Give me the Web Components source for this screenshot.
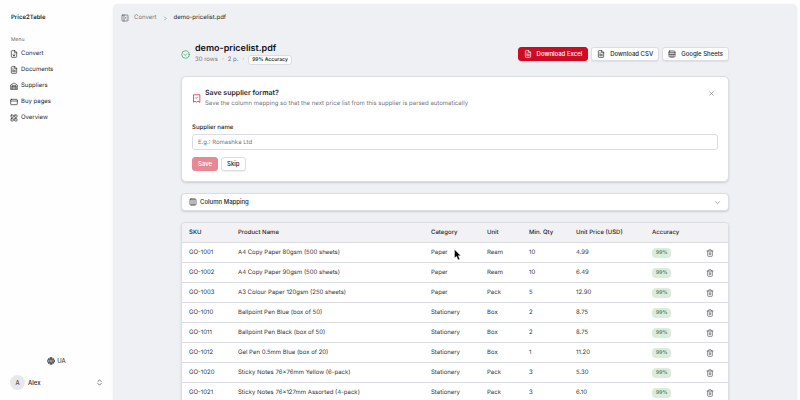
<!DOCTYPE html>
<html lang="en">
<head>
<meta charset="utf-8">
<meta name="viewport" content="width=device-width, initial-scale=1">
<title>Price2Table</title>
<style>
  :root {
    --ink: #27272a;
    --muted: #76767e;
    --line: #dcdde2;
    --canvas: #eff0f4;
    --red: #cf0a24;
    --shadow: 0 1px 2px rgba(30, 34, 50, 0.16);
  }

  body {
    margin: 0;
    background: #fefefe;
    color: var(--ink);
    font: 6px/10px Inter, "Liberation Sans", sans-serif;
    text-rendering: geometricPrecision;
  }
</style>
</head>
<body>
<app-shell>
  <side-bar slot="sidebar"></side-bar>
  <bread-crumb></bread-crumb>
  <page-content>
    <result-header></result-header>
    <format-card></format-card>
    <column-mapping></column-mapping>
    <price-table></price-table>
  </page-content>
</app-shell>
<mouse-pointer></mouse-pointer>

<script>
const ICONS = {
  convert: `<path d="M14 2H6a2 2 0 0 0-2 2v16a2 2 0 0 0 2 2h12a2 2 0 0 0 2-2V8z"/><path d="M14 2v6h6M12 18v-6M9 15l3 3 3-3"/>`,
  document: `<path d="M14 2H6a2 2 0 0 0-2 2v16a2 2 0 0 0 2 2h12a2 2 0 0 0 2-2V8z"/><path d="M14 2v6h6M8 9h2M8 13h8M8 17h8"/>`,
  suppliers: `<path d="M2 21V9l10-6 10 6v12z"/><path d="M6 21V11h12v10M6 14h12M6 18h12"/>`,
  page: `<rect x="2" y="4" width="20" height="16" rx="2"/><path d="M2 9h20"/>`,
  grid: `<rect x="3" y="3" width="7" height="7" rx="1"/><rect x="14" y="3" width="7" height="7" rx="1"/><rect x="3" y="14" width="7" height="7" rx="1"/><rect x="14" y="14" width="7" height="7" rx="1"/>`,
  globe: `<circle cx="12" cy="12" r="10"/><path d="M12 2a14.5 14.5 0 0 0 0 20 14.5 14.5 0 0 0 0-20M2 12h20M4 7h16M4 17h16"/>`,
  updown: `<path d="m6 15 6 6 6-6M6 9l6-6 6 6"/>`,
  panel: `<rect x="3" y="3" width="18" height="18" rx="2"/><path d="M9 3v18M16 9l-3 3 3 3"/>`,
  right: `<path d="m9 17 5-5-5-5"/>`,
  down: `<path d="m5 9 7 7 7-7"/>`,
  check: `<circle cx="12" cy="12" r="10"/><path d="m8.5 12 2.5 2.5 4.5-4.5"/>`,
  table: `<rect x="3" y="3" width="18" height="18" rx="2"/><path d="M3 8h18M3 13h18M9 13v8M15 13v8"/>`,
  bookmark: `<path d="m20 22-4-3-4 3-4-3-4 3V2h16z"/><path d="m9 10 2 2 4-4"/>`,
  close: `<path d="M18 6 6 18M6 6l12 12"/>`,
  columns: `<rect x="3" y="3" width="18" height="18" rx="2"/><path d="M9 3v18M15 3v18"/>`,
  trash: `<path d="M3 6h18M19 6v14a2 2 0 0 1-2 2H7a2 2 0 0 1-2-2V6M8 6V4a2 2 0 0 1 2-2h4a2 2 0 0 1 2 2v2M10 11v6M14 11v6"/>`,
};

class UiIcon extends HTMLElement {
  connectedCallback() {
    this.attachShadow({ mode: "open" });
    this.shadowRoot.innerHTML = `
      <style>
        :host {
          display: block;
          flex: none;
          height: var(--icon-size, 8px);
          width: var(--icon-size, 8px);
        }

        svg {
          display: block;
          fill: none;
          height: 100%;
          stroke: currentColor;
          stroke-linecap: round;
          stroke-linejoin: round;
          stroke-width: 2;
          width: 100%;
        }
      </style>
      <svg viewBox="0 0 24 24" aria-hidden="true">${ICONS[this.getAttribute("name")]}</svg>
    `;
  }
}

class AppShell extends HTMLElement {
  connectedCallback() {
    this.attachShadow({ mode: "open" });
    this.shadowRoot.innerHTML = `
      <style>
        :host {
          box-sizing: border-box;
          display: grid;
          grid-template-columns: 113px minmax(0, 1fr);
          height: 100vh;
          padding: 4px 3px 0 0;
        }

        main {
          background: var(--canvas);
          border-radius: 5px 5px 0 0;
          box-shadow: 0 0 2px rgba(30, 34, 50, 0.08);
          overflow-y: auto;
          scrollbar-width: none;
        }
      </style>
      <slot name="sidebar"></slot>
      <main><slot></slot></main>
    `;
  }
}

class NavLink extends HTMLElement {
  connectedCallback() {
    this.attachShadow({ mode: "open" });
    this.shadowRoot.innerHTML = `
      <style>
        :host {
          display: block;
        }

        a {
          align-items: center;
          color: inherit;
          display: flex;
          gap: 3px;
          height: 16px;
          text-decoration: none;
        }
      </style>
      <a href="#"><ui-icon name="${this.getAttribute("icon")}"></ui-icon><slot></slot></a>
    `;
  }
}

class SideBar extends HTMLElement {
  connectedCallback() {
    this.attachShadow({ mode: "open" });
    this.shadowRoot.innerHTML = `
      <style>
        :host {
          box-sizing: border-box;
          display: flex;
          flex-direction: column;
          min-height: 0;
          padding: 9px 10px 10px;
        }

        .brand {
          font-weight: 600;
          padding-left: 1px;
        }

        .label {
          color: #62626a;
          font-size: 5px;
          margin: 12px 0 1px;
          padding-left: 1px;
        }

        nav {
          flex: 1;
        }

        button {
          align-items: center;
          background: none;
          border: 0;
          color: inherit;
          display: flex;
          font: inherit;
          padding: 0;
        }

        .lang {
          align-self: center;
          gap: 2px;
          margin-bottom: 9px;
        }

        .user {
          gap: 3px;
          width: 100%;
          --icon-size: 7px;
        }

        .avatar {
          background: #e8e8ea;
          border-radius: 50%;
          height: 15px;
          line-height: 15px;
          text-align: center;
          width: 15px;
        }

        .name {
          flex: 1;
          font-weight: 500;
          text-align: left;
        }
      </style>
      <div class="brand">Price2Table</div>
      <div class="label">Menu</div>
      <nav>
        <nav-link icon="convert">Convert</nav-link>
        <nav-link icon="document">Documents</nav-link>
        <nav-link icon="suppliers">Suppliers</nav-link>
        <nav-link icon="page">Buy pages</nav-link>
        <nav-link icon="grid">Overview</nav-link>
      </nav>
      <button class="lang" type="button"><ui-icon name="globe"></ui-icon>UA</button>
      <button class="user" type="button">
        <span class="avatar">A</span><span class="name">Alex</span><ui-icon name="updown"></ui-icon>
      </button>
    `;
  }
}

class BreadCrumb extends HTMLElement {
  connectedCallback() {
    this.attachShadow({ mode: "open" });
    this.shadowRoot.innerHTML = `
      <style>
        :host {
          align-items: center;
          display: flex;
          gap: 5px;
          padding: 9px 8px 0;
        }

        button {
          background: none;
          border: 0;
          color: #55555c;
          padding: 0;
        }

        a {
          color: var(--muted);
          text-decoration: none;
        }

        .sep {
          color: var(--muted);
          --icon-size: 7px;
        }
      </style>
      <button type="button" aria-label="Toggle sidebar"><ui-icon name="panel"></ui-icon></button>
      <a href="#">Convert</a>
      <ui-icon class="sep" name="right"></ui-icon>
      <span>demo-pricelist.pdf</span>
    `;
  }
}

class PageContent extends HTMLElement {
  connectedCallback() {
    this.attachShadow({ mode: "open" });
    this.shadowRoot.innerHTML = `
      <style>
        :host {
          display: flex;
          flex-direction: column;
          gap: 11px;
          margin: 0 auto;
          max-width: 548px;
          padding: 20px 16px 16px;
        }
      </style>
      <slot></slot>
    `;
  }
}

class UiButton extends HTMLElement {
  connectedCallback() {
    const icon = this.getAttribute("icon");
    this.attachShadow({ mode: "open" });
    this.shadowRoot.innerHTML = `
      <style>
        :host {
          display: block;
        }

        button {
          align-items: center;
          background: #fff;
          border: 1px solid var(--line);
          border-radius: 3px;
          box-shadow: 0 1px 1px rgba(30, 34, 50, 0.08);
          color: inherit;
          display: flex;
          font: inherit;
          font-weight: 500;
          gap: 5px;
          height: 14px;
          padding: 0 5px;
          white-space: nowrap;
        }

        :host([primary]) button {
          background: var(--red);
          border-color: var(--red);
          color: #fff;
        }

        button:disabled {
          opacity: 0.48;
        }
      </style>
      <button type="button" ${this.hasAttribute("disabled") ? "disabled" : ""}>
        ${icon ? `<ui-icon name="${icon}"></ui-icon>` : ""}<slot></slot>
      </button>
    `;
  }
}

class ResultHeader extends HTMLElement {
  connectedCallback() {
    this.attachShadow({ mode: "open" });
    this.shadowRoot.innerHTML = `
      <style>
        :host {
          align-items: center;
          display: flex;
          gap: 5px;
        }

        .status {
          color: #2fae66;
          --icon-size: 9px;
        }

        .title {
          flex: 1;
        }

        h1 {
          color: #111114;
          font-size: 9px;
          font-weight: 600;
          line-height: 12px;
          margin: 0;
        }

        .meta {
          align-items: center;
          color: var(--muted);
          display: flex;
          gap: 4px;
        }

        .badge {
          background: #fff;
          border: 1px solid var(--line);
          border-radius: 3px;
          color: var(--ink);
          font-size: 5px;
          font-weight: 600;
          line-height: 8px;
          padding: 0 3px;
        }

        .actions {
          display: flex;
          gap: 3px;
        }
      </style>
      <ui-icon class="status" name="check"></ui-icon>
      <div class="title">
        <h1>demo-pricelist.pdf</h1>
        <div class="meta">
          <span>30 rows</span><span>·</span><span>2 p.</span><span>·</span><span class="badge">99% Accuracy</span>
        </div>
      </div>
      <div class="actions">
        <ui-button primary icon="document">Download Excel</ui-button>
        <ui-button icon="document">Download CSV</ui-button>
        <ui-button icon="table">Google Sheets</ui-button>
      </div>
    `;
  }
}

class FormatCard extends HTMLElement {
  connectedCallback() {
    this.attachShadow({ mode: "open" });
    this.shadowRoot.innerHTML = `
      <style>
        :host {
          background: #fff;
          border: 1px solid var(--line);
          border-radius: 5px;
          box-shadow: var(--shadow);
          display: block;
          padding: 10px;
        }

        header {
          align-items: center;
          display: flex;
          gap: 4px;
        }

        .mark {
          color: #d3243f;
          --icon-size: 9px;
        }

        .text {
          flex: 1;
        }

        h2 {
          font-size: 7px;
          font-weight: 600;
          line-height: 11px;
          margin: 0;
        }

        p {
          color: var(--muted);
          line-height: 12px;
          margin: 0;
        }

        .close {
          align-self: flex-start;
          background: none;
          border: 0;
          color: #66666d;
          padding: 3px;
          --icon-size: 7px;
        }

        label {
          display: block;
          font-weight: 500;
          line-height: 12px;
          margin-top: 12px;
        }

        input {
          border: 1px solid var(--line);
          border-radius: 3px;
          box-sizing: border-box;
          color: inherit;
          display: block;
          font: inherit;
          height: 16px;
          padding: 0 5px;
          text-rendering: inherit;
          width: 100%;
        }

        input::placeholder {
          color: var(--muted);
        }

        .actions {
          display: flex;
          gap: 3px;
          margin-top: 7px;
        }
      </style>
      <header>
        <ui-icon class="mark" name="bookmark"></ui-icon>
        <div class="text">
          <h2>Save supplier format?</h2>
          <p>Save the column mapping so that the next price list from this supplier is parsed automatically</p>
        </div>
        <button class="close" type="button" aria-label="Close"><ui-icon name="close"></ui-icon></button>
      </header>
      <label for="supplier">Supplier name</label>
      <input id="supplier" type="text" placeholder="E.g.: Romashka Ltd">
      <div class="actions">
        <ui-button primary disabled>Save</ui-button>
        <ui-button>Skip</ui-button>
      </div>
    `;
  }
}

class ColumnMapping extends HTMLElement {
  connectedCallback() {
    this.attachShadow({ mode: "open" });
    this.shadowRoot.innerHTML = `
      <style>
        :host {
          display: block;
        }

        button {
          align-items: center;
          background: #fff;
          border: 1px solid var(--line);
          border-radius: 4px;
          box-shadow: var(--shadow);
          color: inherit;
          display: flex;
          font: inherit;
          font-weight: 500;
          gap: 3px;
          height: 18px;
          padding: 0 7px;
          text-align: left;
          width: 100%;
        }

        span {
          flex: 1;
        }

        .arrow {
          color: #66666d;
          --icon-size: 7px;
        }
      </style>
      <button type="button" aria-expanded="false">
        <ui-icon name="columns"></ui-icon><span>Column Mapping</span><ui-icon class="arrow" name="down"></ui-icon>
      </button>
    `;
  }
}

const ROWS = [
  ["GO-1001", "A4 Copy Paper 80gsm (500 sheets)", "Paper", "Ream", "10", "4.99"],
  ["GO-1002", "A4 Copy Paper 90gsm (500 sheets)", "Paper", "Ream", "10", "6.49"],
  ["GO-1003", "A3 Colour Paper 120gsm (250 sheets)", "Paper", "Pack", "5", "12.90"],
  ["GO-1010", "Ballpoint Pen Blue (box of 50)", "Stationery", "Box", "2", "8.75"],
  ["GO-1011", "Ballpoint Pen Black (box of 50)", "Stationery", "Box", "2", "8.75"],
  ["GO-1012", "Gel Pen 0.5mm Blue (box of 20)", "Stationery", "Box", "1", "11.20"],
  ["GO-1020", "Sticky Notes 76×76mm Yellow (6-pack)", "Stationery", "Pack", "3", "5.30"],
  ["GO-1021", "Sticky Notes 76×127mm Assorted (4-pack)", "Stationery", "Pack", "3", "6.10"],
];

class PriceTable extends HTMLElement {
  connectedCallback() {
    const rows = ROWS.map(
      (row) => `
        <tr>
          ${row.map((cell) => `<td>${cell}</td>`).join("")}
          <td><span class="score">99%</span></td>
          <td><button type="button" aria-label="Delete ${row[0]}"><ui-icon name="trash"></ui-icon></button></td>
        </tr>`
    ).join("");

    this.attachShadow({ mode: "open" });
    this.shadowRoot.innerHTML = `
      <style>
        :host {
          background: #fff;
          border: 1px solid var(--line);
          border-radius: 4px;
          box-shadow: var(--shadow);
          display: block;
          overflow: hidden;
        }

        table {
          border-collapse: separate;
          border-spacing: 0;
          table-layout: fixed;
          width: 100%;
        }

        th,
        td {
          border-bottom: 1px solid var(--line);
          box-sizing: border-box;
          height: 20px;
          padding: 1px 0 0 7px;
          text-align: left;
          white-space: nowrap;
        }

        th {
          background: #f2f2f5;
          font-weight: 500;
        }

        td {
          color: #333338;
        }

        .sku { width: 49px; }
        .category { width: 56px; }
        .unit { width: 42px; }
        .qty { width: 47px; }
        .price { width: 76px; }
        .accuracy { width: 54px; }
        .remove { width: 29px; }

        .score {
          background: #dcecdc;
          border-radius: 4px;
          color: #4f7d55;
          display: inline-block;
          font-size: 5px;
          font-weight: 600;
          padding: 0 4px;
          vertical-align: middle;
        }

        button {
          background: none;
          border: 0;
          color: #55555c;
          display: block;
          padding: 0;
        }
      </style>
      <table>
        <thead>
          <tr>
            <th class="sku">SKU</th>
            <th>Product Name</th>
            <th class="category">Category</th>
            <th class="unit">Unit</th>
            <th class="qty">Min. Qty</th>
            <th class="price">Unit Price (USD)</th>
            <th class="accuracy">Accuracy</th>
            <th class="remove"></th>
          </tr>
        </thead>
        <tbody>${rows}</tbody>
      </table>
    `;
  }
}

class MousePointer extends HTMLElement {
  connectedCallback() {
    this.attachShadow({ mode: "open" });
    this.shadowRoot.innerHTML = `
      <style>
        :host {
          left: 454px;
          pointer-events: none;
          position: absolute;
          top: 249px;
        }

        svg {
          display: block;
        }
      </style>
      <svg width="8" height="12" viewBox="0 0 8 12" aria-hidden="true">
        <path d="M.5.5v8.6l2-1.8 1.6 3.6 1.7-.8-1.6-3.4h2.6z" fill="#000" stroke="#fff" stroke-width=".4"/>
      </svg>
    `;
  }
}

customElements.define("ui-icon", UiIcon);
customElements.define("ui-button", UiButton);
customElements.define("nav-link", NavLink);
customElements.define("app-shell", AppShell);
customElements.define("side-bar", SideBar);
customElements.define("bread-crumb", BreadCrumb);
customElements.define("page-content", PageContent);
customElements.define("result-header", ResultHeader);
customElements.define("format-card", FormatCard);
customElements.define("column-mapping", ColumnMapping);
customElements.define("price-table", PriceTable);
customElements.define("mouse-pointer", MousePointer);
</script>
</body>
</html>
